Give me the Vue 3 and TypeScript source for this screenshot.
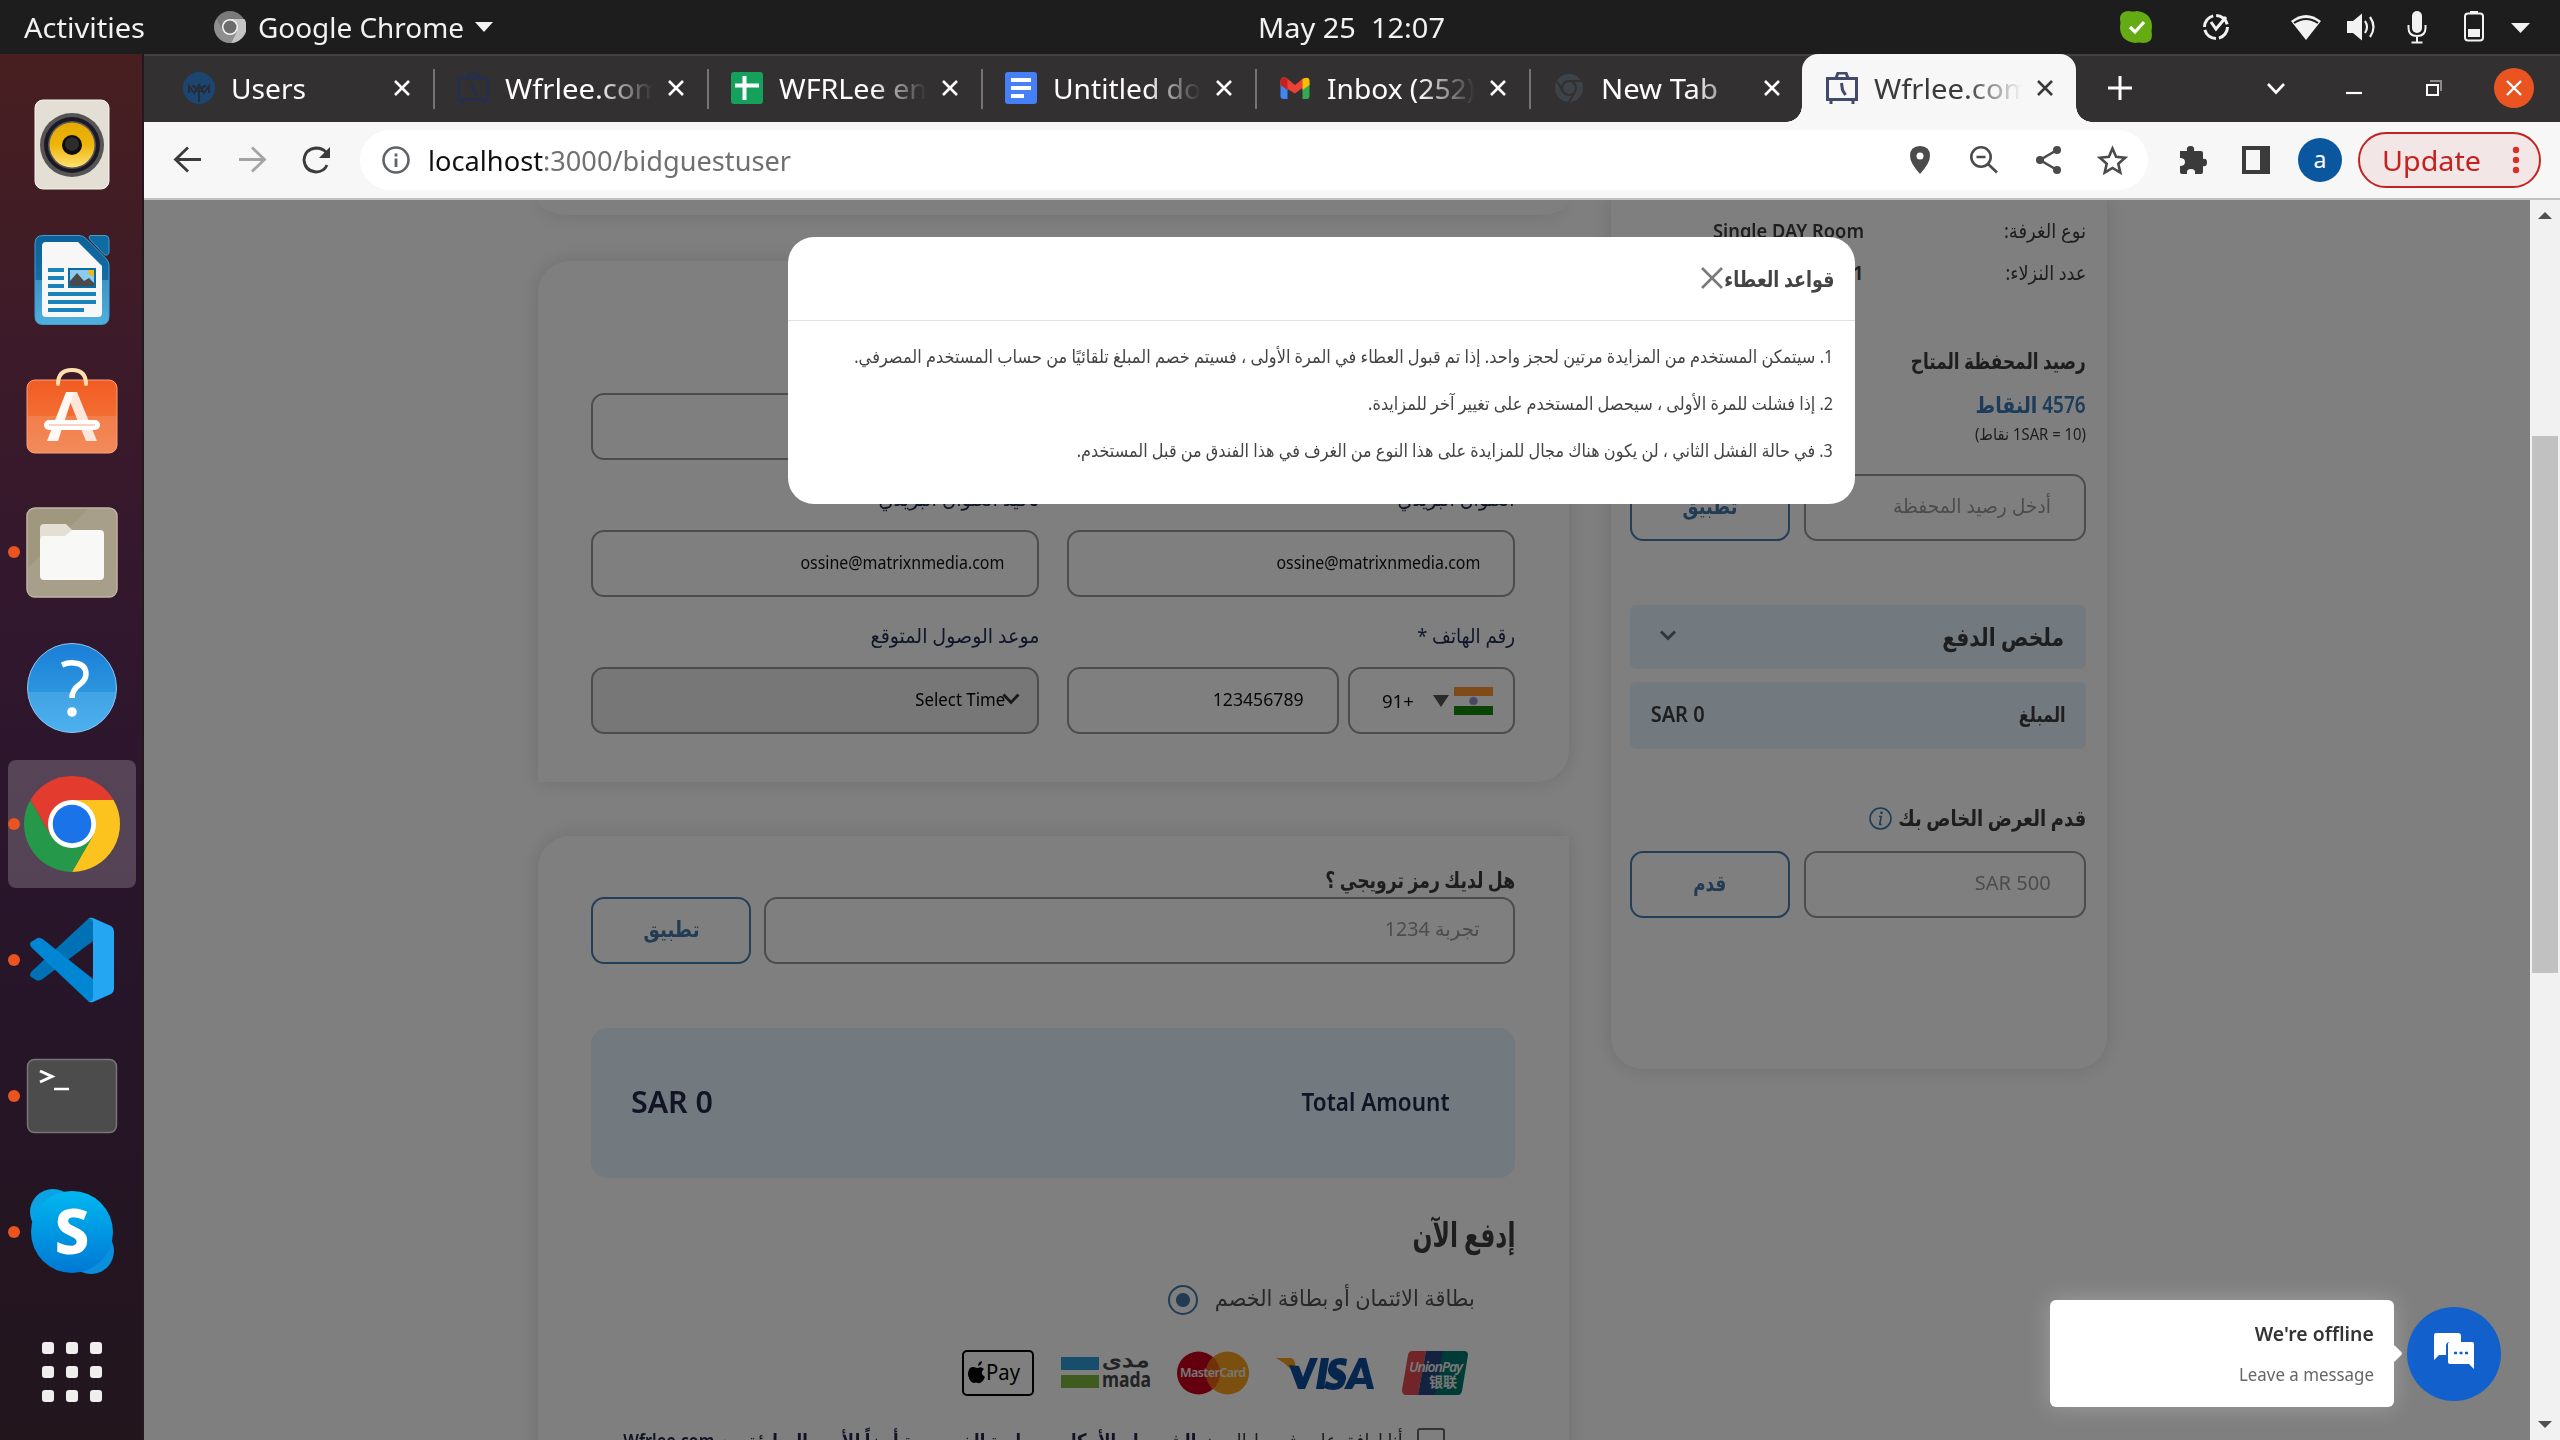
<script setup lang="ts">
interface Tab {
  icon: string
  title: string
  width: number
  active?: boolean
}

const tabs: Tab[] = [
  { icon: 'users', title: 'Users', width: 75 },
  { icon: 'case', title: 'Wfrlee.com', width: 157 },
  { icon: 'sheets', title: 'WFRLee en', width: 148 },
  { icon: 'docs', title: 'Untitled do', width: 148 },
  { icon: 'gmail', title: 'Inbox (252)', width: 148 },
  { icon: 'chrome', title: 'New Tab', width: 117 },
  { icon: 'case', title: 'Wfrlee.com', width: 157, active: true },
]

const dock = [
  { name: 'speaker', running: false },
  { name: 'writer', running: false },
  { name: 'software', running: false },
  { name: 'files', running: true },
  { name: 'help', running: false },
  { name: 'chrome', running: true },
  { name: 'code', running: true },
  { name: 'terminal', running: true },
  { name: 'skype', running: true },
]

const rules = [
  { text: '1. سيتمكن المستخدم من المزايدة مرتين لحجز واحد. إذا تم قبول العطاء في المرة الأولى ، فسيتم خصم المبلغ تلقائيًا من حساب المستخدم المصرفي.', width: 979 },
  { text: '2. إذا فشلت للمرة الأولى ، سيحصل المستخدم على تغيير آخر للمزايدة.', width: 465 },
  { text: '3. في حالة الفشل الثاني ، لن يكون هناك مجال للمزايدة على هذا النوع من الغرف في هذا الفندق من قبل المستخدم.', width: 756 },
]

const grid = [0, 24, 48]

// Squeezes or stretches a run of text to the given width in pixels.
const vFit = {
  mounted(el: HTMLElement, binding: { value: number }) {
    const natural = el.getBoundingClientRect().width
    if (!natural) return
    const rtl = getComputedStyle(el.parentElement as HTMLElement).direction === 'rtl'
    el.style.transformOrigin = rtl ? 'right center' : 'left center'
    el.style.transform = `scaleX(${binding.value / natural})`
    const rest = `${binding.value - natural}px`
    if (rtl) el.style.marginLeft = rest
    else el.style.marginRight = rest
  },
}
</script>

<template>
  <div class="desktop">
    <header class="topbar">
      <div class="top-left">
        <span v-fit="121" class="t">Activities</span>
        <svg class="top-chrome" width="32" height="32" viewBox="0 0 32 32">
          <circle cx="16" cy="16" r="16" fill="#7a7a7a" />
          <path d="M16 8h14.500A16 16 0 0 1 17 32l6-12z" fill="#c4c4c4" />
          <path d="M2.500 8A16 16 0 0 0 17 32l6-12-14 0z" fill="#8f8f8f" />
          <circle cx="16" cy="16" r="8" fill="#f4f4f4" /><circle cx="16" cy="16" r="6.500" fill="#6c6c6c" />
        </svg>
        <span v-fit="206" class="t">Google Chrome</span>
        <i class="tri"></i>
      </div>
      <div class="clock"><span v-fit="187" class="t">May 25&nbsp; 12:07</span></div>
      <svg class="tray" width="440" height="54" viewBox="2110 0 440 54" fill="#f2f2f2">
        <path d="M2120 19q0-8 9-8 3 1 8 0 15 2 15 16-1 4 0 8 0 8-9 8-3-1-8 0-15-2-15-16 1-4 0-8z" fill="#65ab14" />
        <path d="M2130 27l5 5 9-10" fill="none" stroke="#fff" stroke-width="3.200" />
        <circle cx="2216" cy="27" r="11.500" fill="none" stroke="#f2f2f2" stroke-width="3" stroke-dasharray="15 3" />
        <path d="M2211 22l5 7 10-12" fill="none" stroke="#f2f2f2" stroke-width="3" />
        <path d="M2291 21q15-12 30 0l-15 19z" /><path d="M2294 23q12-8 24 0" fill="none" stroke="#1d1d1d" stroke-width="2" />
        <path d="M2347 21h6l9-7.500v27l-9-7.500h-6z" /><path d="M2365 21q4 6 0 12M2370 17q7 10 0 20" fill="none" stroke="#f2f2f2" stroke-width="2.200" />
        <rect x="2412" y="11" width="10" height="22" rx="5" /><path d="M2408.500 25v3q0 8 8.500 8t8.500-8v-3M2417 36v6M2411.500 42.500h11" fill="none" stroke="#f2f2f2" stroke-width="2" />
        <rect x="2465" y="13.500" width="18" height="27" rx="3" fill="none" stroke="#f2f2f2" stroke-width="2" /><path d="M2470 11h8v3h-8zM2468 29h12v8h-12z" />
        <path d="M2511 23h19l-9.500 10z" />
      </svg>
    </header>

    <div class="below">
      <aside class="dock">
        <div v-for="item in dock" :key="item.name" class="dock-item" :class="{ current: item.name === 'chrome' }">
          <i v-if="item.running" class="dot"></i>
          <svg width="128" height="128" viewBox="0 0 128 128">
            <defs>
              <linearGradient id="g-writer" x2="0" y2="1"><stop stop-color="#0b6299" /><stop offset=".5" stop-color="#126ea5" /><stop offset=".5" stop-color="#3b94c6" /><stop offset="1" stop-color="#4fb0de" /></linearGradient>
              <linearGradient id="g-soft" x2="0" y2="1"><stop stop-color="#f25c22" /><stop offset=".5" stop-color="#f26d33" /><stop offset=".5" stop-color="#f27f4b" /><stop offset="1" stop-color="#f38a5a" /></linearGradient>
              <linearGradient id="g-help" x2="0" y2="1"><stop stop-color="#1b7ed6" /><stop offset=".54" stop-color="#2b96e0" /><stop offset=".54" stop-color="#42a2e4" /><stop offset="1" stop-color="#4cb0ee" /></linearGradient>
              <linearGradient id="g-skype" x2="0" y2="1"><stop stop-color="#00b7f0" /><stop offset="1" stop-color="#0078d4" /></linearGradient>
              <linearGradient id="g-yellow" x2="0" y2="1"><stop stop-color="#e5a900" /><stop offset=".5" stop-color="#edb60c" /><stop offset="1" stop-color="#ffe070" /></linearGradient>
            </defs>
            <g v-if="item.name === 'speaker'">
              <rect x="27" y="20" width="74" height="89" rx="8" fill="#e3dfd4" stroke="#f6f4ef" stroke-width="1" />
              <circle cx="64" cy="65" r="32" fill="#555" /><circle cx="64" cy="65" r="28" fill="#1c1924" />
              <circle cx="64" cy="65" r="24" fill="#55545a" /><circle cx="64" cy="65" r="22.500" fill="url(#g-yellow)" />
              <circle cx="64" cy="65" r="10" fill="#0d0d0d" /><circle cx="64" cy="64" r="7" fill="#2c2c2c" />
            </g>
            <g v-else-if="item.name === 'writer'">
              <path d="M35 19.500h36q4 0 7 3l20 20q3 3 3 7v51q0 8-8 8H35q-8 0-8-8v-73q0-8 8-8z" fill="url(#g-writer)" stroke="#3f9fd0" stroke-width="1" />
              <path d="M82 19.500h15q4 0 4 4v13q-1 4-5 2l-14-15q-2-3 0-4z" fill="#0f6ca2" stroke="#3f9fd0" stroke-width="1" />
              <path d="M38 26h32l24 24v47q0 4-4 4H38q-4 0-4-4V30q0-4 4-4z" fill="#f7f7f7" />
              <path d="M40 54h16M40 62h16M40 70h16M40 78h48M40 86h48M40 94h36" stroke="#1c84bd" stroke-width="4" />
              <rect x="60" y="52" width="28" height="20" fill="#0c6aa3" /><rect x="62" y="54" width="24" height="16" fill="#8ccaf0" />
              <path d="M62 70v-5l7-8 7 8 5-3 5 5v3z" fill="#4a4a4a" /><path d="M80 54h6v6q-6 0-6-6z" fill="#f0b90f" />
            </g>
            <g v-else-if="item.name === 'software'">
              <rect x="19" y="28" width="90" height="73" rx="8" fill="url(#g-soft)" stroke="#f6a37c" stroke-width="1" />
              <path d="M50 32q0-14 14-14t14 14" fill="none" stroke="#ffdfae" stroke-width="4" stroke-linecap="round" />
              <path d="M58 40h11l20 49H78z" fill="#ffe6da" /><path d="M58 40h8L50 89H39z" fill="#fff8f3" />
              <rect x="36" y="68" width="56" height="10" rx="5" fill="#fff" /><path d="M41 73h46" stroke="#fbd3c1" stroke-width="2" />
            </g>
            <g v-else-if="item.name === 'files'">
              <rect x="19" y="20" width="90" height="89" rx="8" fill="#a0977f" stroke="#bdb6a4" stroke-width="1.500" />
              <path d="M20 80L80 21h21q7 0 7 7v73q0 7-7 7H27q-7 0-7-7z" fill="#aba390" opacity=".7" />
              <path d="M32 50V40q0-4 4-4h22l6 6v8z" fill="#e3dfd4" />
              <path d="M36 48h21l7-6h28q4 0 4 4v42q0 4-4 4H36q-4 0-4-4V52q0-4 4-4z" fill="#f8f8f7" />
            </g>
            <g v-else-if="item.name === 'help'">
              <circle cx="64" cy="64" r="44.500" fill="url(#g-help)" stroke="#8ec9f3" stroke-width="1" />
              <path d="M54 41q7-3 12-2 12 1 12 11 0 6-7 11-7 5-7 13" fill="none" stroke="#fff" stroke-width="5.500" /><circle cx="64" cy="88" r="4.800" fill="#fff" />
            </g>
            <g v-else-if="item.name === 'chrome'">
              <path d="M64 64L22.430 40A48 48 0 0 1 105.570 40z" fill="#e33b2e" />
              <path d="M64 40H105.570A48 48 0 0 1 64 112L84.800 76z" fill="#fcc31e" />
              <path d="M22.430 40A48 48 0 0 0 64 112L84.800 76 43.200 76z" fill="#26984a" />
              <path d="M22.430 40L43.200 76 64 64V40z" fill="#e33b2e" />
              <circle cx="64" cy="64" r="24" fill="#fff" /><circle cx="64" cy="64" r="19.300" fill="#1a73e8" />
            </g>
            <g v-else-if="item.name === 'code'">
              <path d="M22 79q0-2 2-4L79 24q3-3 6-2v23L36 82q-5 4-8 2l-5-3q-1-1-1-2z" fill="#0071b5" />
              <path d="M22 48q0 2 2 4l55 52q3 3 6 2V83L36 44q-5-4-8-1l-5 3q-1 1-1 2z" fill="#0086d3" />
              <path d="M85 22l18 8q3 2 3 5v58q0 3-3 5l-18 8q-3 1-5-1 5 1 5-4V27q0-5-5-4 2-2 5-1z" fill="#24a6f2" />
            </g>
            <g v-else-if="item.name === 'terminal'">
              <rect x="19.500" y="27.500" width="89" height="73" rx="7" fill="#4c4c4c" stroke="#767676" stroke-width="1.500" />
              <path d="M32 39l12 5.500-12 5.500" fill="none" stroke="#fff" stroke-width="3" /><path d="M46 57h15" stroke="#fff" stroke-width="2.500" />
            </g>
            <g v-else>
              <circle cx="45" cy="44" r="23" fill="#0aa3e6" /><circle cx="83" cy="83" r="23" fill="#0a8fdc" />
              <circle cx="64" cy="64" r="41" fill="url(#g-skype)" />
              <text x="64" y="86" text-anchor="middle" font-family="Noto Sans, sans-serif" font-weight="800" font-size="62" fill="#fff">S</text>
            </g>
          </svg>
        </div>
        <svg class="apps" width="60" height="60" viewBox="0 0 60 60" fill="#f0efee">
          <template v-for="y in grid" :key="y"><rect v-for="x in grid" :key="x" :x="x" :y="y" width="12" height="12" rx="3" /></template>
        </svg>
      </aside>

      <main class="browser">
        <nav class="strip">
          <div v-for="(tab, i) in tabs" :key="i" class="tab" :class="{ active: tab.active, sep: i < 5 }">
            <svg width="32" height="32" viewBox="0 0 32 32">
              <g v-if="tab.icon === 'users'"><circle cx="16" cy="16" r="16" fill="#1c466f" /><path d="M6 21v-7l5 7 5-8 5 8 5-7v7M16 13v17M9 15q3-3 5 5M23 15q-3-3-5 5" fill="none" stroke="#262c38" stroke-width="2" /></g>
              <g v-else-if="tab.icon === 'case'" fill="none" :stroke="tab.active ? '#414a6b' : '#272e4b'" stroke-width="3">
                <path d="M1.500 6.500h29v21h-29z" /><path d="M10 6l2-5h8l2 5M5 27v5M27 27v5" /><path d="M15.500 11l1 7 3 5" />
              </g>
              <g v-else-if="tab.icon === 'sheets'"><rect width="32" height="32" rx="3" fill="#15a05c" /><path d="M13.500 4v24M4 13.500h24" stroke="#fff" stroke-width="4" /></g>
              <g v-else-if="tab.icon === 'docs'"><rect width="32" height="32" rx="3" fill="#4680f6" /><path d="M6 8h20M6 16h20M6 24h13" stroke="#fff" stroke-width="4" /></g>
              <g v-else-if="tab.icon === 'gmail'"><path d="M1.500 10v14q0 3 3 3h4V13z" fill="#4285f4" /><path d="M30.500 10v14q0 3-3 3h-4V13z" fill="#34a853" /><path d="M1.500 13V8q1-4 6-2l8.500 7 8.500-7V15l-8.500 6.500z" fill="#ea4335" /><path d="M1.500 13V8q1-4 7-1v11z" fill="#c5221f" /><path d="M30.500 13V8q-1-4-7-1v11z" fill="#fbbc04" /></g>
              <g v-else><circle cx="16" cy="16" r="14" fill="#3d4347" /><circle cx="16" cy="16" r="7" fill="none" stroke="#333031" stroke-width="2.200" /><path d="M16 9h12M10 19.500L4 9.500M22 19.500L16 30" stroke="#333031" stroke-width="2.200" /></g>
            </svg>
            <div class="tab-label"><span v-fit="tab.width" class="t">{{ tab.title }}</span></div>
            <svg class="x" width="18" height="18" viewBox="0 0 18 18"><path d="M2 2l14 14M16 2L2 16" fill="none" stroke="currentColor" stroke-width="2.600" /></svg>
          </div>
          <svg class="window-controls" width="484" height="68" viewBox="2076 54 484 68" fill="none" stroke="#fff" stroke-width="3">
            <path d="M2108 88h24M2120 76v24" /><path d="M2268 84l8 8.500 8-8.500" stroke-width="2.600" /><path d="M2346 93h16" stroke-width="2.200" />
            <path d="M2427 85h11v10h-11z" stroke-width="2" /><path d="M2430 81h11v10" stroke="#8b898a" stroke-width="2" />
            <circle cx="2514" cy="88" r="20" fill="#e95420" stroke="none" /><path d="M2507 81l14 14M2521 81l-14 14" stroke-width="2.400" />
          </svg>
        </nav>

        <div class="toolbar">
          <svg class="nav-icons" width="216" height="76" viewBox="144 122 216 76" fill="none" stroke="#3b3b3b" stroke-width="2.800">
            <path d="M201 159.500h-24M188 147.500l-12.500 12 12.500 12" /><path d="M239 159.500h24M252 147.500l12.500 12-12.500 12" stroke="#a3a3a3" />
            <path d="M326 152q-4-4-10-4-11 1-12 12 1 11 12 12 8 0 11-7" /><path d="M330 147v11h-11z" fill="#3b3b3b" stroke="none" />
          </svg>
          <div class="omnibox">
            <svg width="28" height="28" viewBox="0 0 28 28"><circle cx="14" cy="14" r="12.500" fill="none" stroke="#5f6368" stroke-width="2.600" /><path d="M14 12.500v8.500M14 7.500v3" stroke="#5f6368" stroke-width="2.800" /></svg>
            <p class="url"><span v-fit="115" class="t host">localhost</span><span v-fit="248" class="t">:3000/bidguestuser</span></p>
            <svg class="omni-icons" width="240" height="60" viewBox="1900 130 240 60" fill="none" stroke="#4b4b4b" stroke-width="2.600">
              <path d="M1920 146q10 0 10 10 0 7-10 18-10-11-10-18 0-10 10-10z" fill="#4b4b4b" stroke="none" /><circle cx="1920" cy="156" r="3.500" fill="#fff" stroke="none" />
              <circle cx="1981" cy="157" r="9.700" /><path d="M1976.500 157h9M1988 164l9 8.500" />
              <path d="M2057 150l-17 10 17 10" /><g fill="#4b4b4b" stroke="none"><circle cx="2057" cy="150" r="4" /><circle cx="2040" cy="160" r="4" /><circle cx="2057" cy="170" r="4" /></g>
              <path d="M2112.500 148.500l3.600 8.300 9 .9-6.800 6 2 8.900-7.800-4.600-7.800 4.600 2-8.900-6.800-6 9-.9z" />
            </svg>
          </div>
          <svg class="ext" width="120" height="60" viewBox="2170 130 120 60" fill="#3b3b3b">
            <path d="M2180 151h7q-1-5 3.500-5t3.500 5h7q2 0 2 2v6q4-1 4 3.500t-4 3.500v6q0 2-2 2h-6q1-5-4-5t-4 5h-5q-2 0-2-2v-6q5 0 5-4t-5-4v-5q0-2 0-2z" />
            <path d="M2242 146h28v28h-28zM2246 150v20h14v-20z" fill-rule="evenodd" />
          </svg>
          <div class="avatar">a</div>
          <div class="update"><span v-fit="99" class="t">Update</span><svg width="8" height="28" viewBox="0 0 8 28" fill="#d93025"><circle cx="4" cy="4" r="3.200" /><circle cx="4" cy="14" r="3.200" /><circle cx="4" cy="24" r="3.200" /></svg></div>
        </div>

        <div class="viewport">
          <div class="page" dir="rtl">
            <section class="sidebar">
              <div class="line info"><span v-fit="82">نوع الغرفة:</span></div>
              <div class="line info"><span v-fit="81">عدد النزلاء:</span></div>
              <div class="values"><b v-fit="151">Single DAY Room</b><b>1</b></div>
              <div class="line head wallet"><b v-fit="175">رصيد المحفظة المتاح</b></div>
              <div class="line points"><b v-fit="110">4576 النقاط</b></div>
              <div class="rate"><span v-fit="111">(1SAR = 10 نقاط)</span></div>
              <div class="entry"><div class="box grow ph"><span v-fit="158">أدخل رصيد المحفظة</span></div><div class="btn"><b v-fit="55">تطبيق</b></div></div>
              <div class="summary">
                <b v-fit="122">ملخص الدفع</b>
                <svg width="18" height="11" viewBox="0 0 18 11"><path d="M2 1.500l7 7 7-7" fill="none" stroke="#666c74" stroke-width="3" /></svg>
              </div>
              <div class="amount"><b v-fit="47">المبلغ</b><b v-fit="54">SAR 0</b></div>
              <div class="line head offer"><b v-fit="188">قدم العرض الخاص بك</b>
                <svg width="23" height="23" viewBox="0 0 23 23"><circle cx="11.500" cy="11.500" r="10.500" fill="none" stroke="#3a78b4" stroke-width="1.600" /><path d="M10 9.500h2.200l-1.500 8h2" fill="none" stroke="#3a78b4" stroke-width="1.600" /><circle cx="12.500" cy="5.800" r="1.400" fill="#3a78b4" /></svg>
              </div>
              <div class="entry bid"><div class="box grow ph"><span v-fit="76">SAR 500</span></div><div class="btn"><b v-fit="33">قدم</b></div></div>
            </section>

            <div class="main">
              <section class="card stub"></section>
              <section class="card guest">
                <div class="cols"><div class="box"></div><div class="box"></div></div>
                <div class="cols line label"><div><span v-fit="117">العنوان البريدي</span></div><div><span v-fit="161">تأكيد العنوان البريدي</span></div></div>
                <div class="cols"><div class="box"><span v-fit="204">ossine@matrixnmedia.com</span></div><div class="box"><span v-fit="204">ossine@matrixnmedia.com</span></div></div>
                <div class="cols line label"><div><span v-fit="98">رقم الهاتف *</span></div><div><span v-fit="169">موعد الوصول المتوقع</span></div></div>
                <div class="cols">
                  <div class="phone">
                    <div class="box country">
                      <svg width="39" height="28" viewBox="0 0 39 28"><path d="M0 0h39v9H0z" fill="#ff9933" /><path d="M0 9h39v10H0z" fill="#fff" /><path d="M0 19h39v9H0z" fill="#138808" /><circle cx="19.500" cy="14" r="4" fill="#8d8dc6" stroke="#b4b4e0" /></svg>
                      <i class="caret"></i><span v-fit="32" dir="ltr">91+</span>
                    </div>
                    <div class="box number"><span v-fit="91">123456789</span></div>
                  </div>
                  <div class="box select"><svg width="18" height="12" viewBox="0 0 18 12"><path d="M1.500 1.500L9 9.500l7.500-8" fill="none" stroke="#333" stroke-width="2.800" /></svg><span v-fit="90">Select Time</span></div>
                </div>
              </section>
              <section class="card pay">
                <div class="promo-title"><b v-fit="190">هل لديك رمز ترويجي ؟</b></div>
                <div class="entry promo"><div class="box grow ph"><span v-fit="95">تجربة 1234</span></div><div class="btn"><b v-fit="56">تطبيق</b></div></div>
                <div class="total"><b v-fit="148">Total Amount</b><b v-fit="82" class="sum">SAR 0</b></div>
                <div class="now"><b v-fit="103">إدفع الآن</b></div>
                <div class="radio"><span v-fit="260">بطاقة الائتمان أو بطاقة الخصم</span><i></i></div>
                <div class="logos">
                  <svg width="66" height="44" viewBox="0 0 66 44"><path d="M10 0h14l-8 44H4q-4 0-4-5L6 4q1-4 4-4z" fill="#e24a50" /><path d="M24 0h18l-8 44H16z" fill="#26457f" /><path d="M41 0h21q4 0 4 4l-6 36q-1 4-4 4H33z" fill="#00796f" /><text x="7" y="21" font-size="14" textLength="54" font-style="italic">UnionPay</text><text x="27" y="36" font-size="14" font-family="Noto Sans CJK SC" textLength="28">银联</text></svg>
                  <svg class="visa" width="98" height="33" viewBox="0 0 98 33"><path d="M0 1h14q4 0 5 5l4 20Q17 10 0 1z" fill="#f6a01f" /><g fill="#0c4d9c"><path d="M13 8l9 24h7L42 1h-8l-7 19-4-11zM45 1h8l-5 31h-8zM71 2l-1 7q-12-4-9 2 10 4 9 11-2 11-12 11-6 0-10-2l2-7q11 5 12 0-11-5-10-12Q54-2 71 2zM83 1h7l8 31h-7l-1-5H79l-3 5h-8zM85 10l-4 11h7z" /></g></svg>
                  <svg width="72" height="44" viewBox="0 0 72 44"><circle cx="21.500" cy="22" r="21.500" fill="#c9001b" /><circle cx="50.500" cy="22" r="21.500" fill="#f79e1b" /><path d="M36 6a21.500 21.500 0 0 1 0 32 21.500 21.500 0 0 1 0-32z" fill="#e46313" /><text x="3" y="25.500" font-size="12.500" font-weight="600" textLength="66">MasterCard</text></svg>
                  <svg width="90" height="34" viewBox="0 0 90 34"><path d="M0 1h38v13H0z" fill="#2d9cd9" /><path d="M0 19h38v13H0z" fill="#81b640" /><text x="41" y="31" font-size="22" font-weight="700" textLength="49" lengthAdjust="spacingAndGlyphs" class="dark">mada</text><text x="89" y="11" font-size="20" textLength="48" lengthAdjust="spacingAndGlyphs" class="dark" direction="rtl">مدى</text></svg>
                  <div class="apple"><svg width="66" height="40" viewBox="0 0 66 40"><path d="M14 15q3-2 6 1-5 4 1 8-3 7-7 6-2-1-4 0-4 0-6-8 0-9 6-8 2 1 4 1zM14 13q0-4 4-5 0 4-4 5z" fill="#000" /><text x="22" y="27" font-size="21" textLength="34" lengthAdjust="spacingAndGlyphs" class="black">Pay</text></svg></div>
                </div>
                <div class="terms"><i></i><span v-fit="199">أنا اوافق على شروط الحجز</span><b v-fit="573">الشروط والأحكام وسياسة الخصوصية أيضاً للأمور المبادئة من Wfrlee.com</b></div>
              </section>
            </div>
          </div>

          <div class="backdrop"></div>

          <div class="modal" dir="rtl">
            <div class="modal-head"><b v-fit="110">قواعد العطاء</b><svg width="22" height="22" viewBox="0 0 22 22"><path d="M1 1l20 20M21 1L1 21" stroke="#7a7a7a" stroke-width="2.600" /></svg></div>
            <div class="modal-body"><p v-for="rule in rules" :key="rule.width"><span v-fit="rule.width">{{ rule.text }}</span></p></div>
          </div>

          <div class="chat">
            <div class="bubble"><b v-fit="119">We're offline</b><span v-fit="135">Leave a message</span></div>
            <svg width="94" height="94" viewBox="0 0 94 94"><circle cx="47" cy="47" r="47" fill="#1260cc" /><path d="M29 26h22q3 0 3 3v6H43q-4 0-4 4v9h-7l-5 5V28q0-2 2-2z" fill="#fff" /><path d="M43 35h22q2 0 2 2v25l-5-5H43q-2 0-2-2V37q0-2 2-2z" fill="#fff" /><path d="M47 46h3M52.500 46h3M58 46h3" stroke="#1260cc" stroke-width="2.600" /></svg>
          </div>

          <div class="scrollbar"><i class="up"></i><i class="thumb"></i><i class="down"></i></div>
        </div>
      </main>
    </div>
  </div>
</template>

<style>
body { margin: 0; overflow: hidden; }
</style>

<style scoped>
.desktop { width: 2560px; height: 1440px; display: flex; flex-direction: column; overflow: hidden; font-family: 'Noto Sans', 'DejaVu Sans', sans-serif; }
.desktop * { box-sizing: border-box; }
svg { flex: none; display: block; }
p { margin: 0; }
span, b { display: inline-block; flex: none; white-space: nowrap; }
b { font-weight: 600; }
.t { font-size: 28px; line-height: 36px; }

.topbar { height: 54px; flex: none; background: #1d1d1d; color: #f2f2f2; display: grid; grid-template-columns: 1258px 1fr 440px; align-items: center; }
.top-left { display: flex; align-items: center; padding-left: 24px; }
.top-chrome { margin: 0 12px 0 69px; }
.tri { margin-left: 11px; border: 9.500px solid transparent; border-top: 10px solid #f2f2f2; border-bottom: 0; }
.tray { margin-right: 10px; justify-self: end; }

.below { flex: 1; display: flex; min-height: 0; }
.dock { width: 144px; flex: none; padding: 26px 8px 0; display: flex; flex-direction: column; align-items: center; gap: 8px; background: linear-gradient(#471f20, #3c1a29 22%, #30172e 43%, #27152a 65%, #22151c); box-shadow: inset -2px 0 #26171f; }
.dock-item { position: relative; width: 128px; height: 128px; border-radius: 8px; }
.dock-item.current { background: rgba(255, 255, 255, .2); }
.dot { position: absolute; left: 0; top: 58px; width: 12px; height: 12px; border-radius: 50%; background: #e95420; }
.apps { margin-top: 38px; }

.browser { flex: 1; min-width: 0; display: flex; flex-direction: column; }
.strip { height: 68px; flex: none; border-top: 2px solid #434142; background: #333031; padding-left: 14px; display: flex; color: #fff; }
.tab { position: relative; width: 274px; flex: none; display: flex; align-items: center; padding: 0 0 2px 25px; }
.tab.sep::after { content: ''; position: absolute; right: -3px; top: 13px; width: 2px; height: 40px; background: #757374; }
.tab.active { margin-top: -2px; padding-top: 2px; background: #f7f7f7; color: #3a3a3a; border-radius: 16px 16px 0 0; padding-left: 24px; }
.tab.active::before, .tab.active::after { content: ''; position: absolute; bottom: 0; width: 16px; height: 16px; }
.tab.active::before { left: -16px; background: radial-gradient(circle at 0 0, transparent 15.500px, #f7f7f7 16px); }
.tab.active::after { right: -16px; background: radial-gradient(circle at 100% 0, transparent 15.500px, #f7f7f7 16px); }
.tab-label { width: 148px; margin-left: 16px; overflow: hidden; display: flex; mask-image: linear-gradient(90deg, #000 62%, transparent 100%); }
.x { margin-left: 14px; }
.window-controls { margin-top: -2px; }

.toolbar { height: 78px; flex: none; background: #f7f7f7; border-bottom: 2px solid #c0c0c0; display: flex; align-items: center; }
.omnibox { width: 1788px; height: 60px; flex: none; border-radius: 30px; background: #fff; display: flex; align-items: center; padding-left: 22px; }
.url { display: flex; margin-left: 18px; color: #6f7072; }
.host { color: #111; }
.omni-icons { margin-left: auto; margin-right: 8px; }
.ext { margin-left: 22px; }
.avatar { width: 44px; height: 44px; margin-left: 8px; border-radius: 50%; background: #0b579f; color: #fff; font-size: 23px; line-height: 42px; text-align: center; }
.update { width: 183px; height: 56px; margin-left: 16px; border: 2px solid #c5221f; border-radius: 28px; background: #f3e6e6; color: #c5221f; display: flex; align-items: center; padding: 0 19px 0 22px; justify-content: space-between; }

.viewport { position: relative; height: 1240px; overflow: hidden; background: #fff; }
.page { height: 1240px; display: flex; gap: 42px; padding-right: 453px; color: #3c3c3c; }
.backdrop { position: absolute; inset: 0; background: rgba(0, 0, 0, .5); }
.line { height: 40px; line-height: 40px; }
.sidebar { position: relative; width: 496px; height: 869px; flex: none; padding: 11px 21px 0 19px; border-radius: 0 0 32px 32px; box-shadow: 0 0 20px rgba(0, 0, 0, .14); display: flex; flex-direction: column; }
.info { font-size: 20px; }
.info + .info { margin-top: 2px; }
.values { position: absolute; top: 11px; right: 243px; width: 160px; font-size: 20px; line-height: 40px; display: flex; flex-direction: column; align-items: flex-start; gap: 2px; }
.head { font-size: 22px; }
.wallet { margin-top: 47px; }
.points { margin-top: 4px; font-size: 23px; color: #3a78b4; }
.rate { margin-top: -4px; height: 26px; line-height: 28px; font-size: 16px; }
.entry { display: flex; gap: 14px; margin-top: 28px; }
.box { height: 67px; border: 2px solid #999; border-radius: 13px; padding: 0 33px 3px; display: flex; align-items: center; font-size: 18px; color: #111; }
.grow { flex: 1; }
.ph { color: #999; font-size: 20px; padding-bottom: 4px; }
.btn { width: 160px; height: 67px; border: 2px solid #4a7eb0; border-radius: 13px; color: #4578a8; font-size: 22px; display: flex; align-items: center; justify-content: center; padding-bottom: 5px; }
.summary { margin-top: 64px; height: 64px; border-radius: 6px; background: #e4f2ff; padding: 0 22px 3px 29px; font-size: 25px; display: flex; align-items: center; justify-content: space-between; }
.amount { margin-top: 13px; height: 67px; border-radius: 6px; background: #e4f2ff; padding: 0 20px 4px 21px; font-size: 21px; display: flex; align-items: center; justify-content: space-between; }
.offer { margin-top: 48px; display: flex; align-items: center; gap: 6px; }
.offer svg { margin-top: 3px; }
.bid { margin-top: 14px; }

.main { width: 1031px; flex: none; display: flex; flex-direction: column; }
.card { padding: 0 54px 0 53px; box-shadow: 0 0 20px rgba(0, 0, 0, .14); flex: none; }
.stub { height: 15px; border-radius: 0 0 32px 32px / 0 0 15px 15px; }
.guest { margin-top: 46px; height: 521px; padding-top: 132px; border-radius: 32px 32px 32px 0; }
.cols { display: grid; grid-template-columns: 448px 448px; gap: 28px; }
.label { margin: 19px 0 11px; font-size: 20px; color: #202c55; }
.phone { display: flex; gap: 9px; }
.country { width: 167px; padding: 0 20px; }
.caret { margin: 0 5px 0 19px; border: 8px solid transparent; border-top: 12px solid #555; border-bottom: 0; }
.number { flex: 1; }
.select { background: #efefef; padding: 0 17px 3px; color: #000; }
.select span { margin-right: -3px; }
.pay { margin-top: 54px; height: 700px; padding-top: 25px; border-radius: 32px 0 0 0; }
.promo-title { height: 36px; line-height: 36px; font-size: 22px; }
.promo { margin-top: 0; gap: 13px; }
.total { margin-top: 64px; height: 150px; border-radius: 16px; background: #e4f2ff; color: #24294d; padding: 0 65px 4px 40px; display: flex; align-items: center; justify-content: space-between; font-size: 25px; }
.sum { font-size: 30px; }
.now { margin-top: 31px; height: 50px; line-height: 50px; font-size: 34px; }
.radio { margin-top: 21px; height: 40px; padding-right: 40px; display: flex; align-items: center; gap: 17px; font-size: 22px; color: #505050; }
.radio span { padding-bottom: 6px; }
.radio i { width: 30px; height: 30px; border: 2.500px solid #4578a8; border-radius: 50%; background: radial-gradient(circle, #4578a8 6.500px, transparent 7.500px); }
.logos { margin-top: 30px; height: 46px; padding-right: 47px; display: flex; align-items: center; gap: 26.500px; direction: rtl; }
.logos svg { direction: ltr; }
.logos text { fill: #eee; font-weight: 600; font-family: 'Noto Sans', 'Noto Sans CJK SC', sans-serif; }
.logos .dark { fill: #45464a; font-weight: 700; }
.logos .black { fill: #000; font-weight: 400; }
.visa { margin-right: 2px; }
.apple { width: 72px; height: 46px; border: 2px solid #000; border-radius: 5px; display: flex; justify-content: center; align-items: center; }
.apple svg { margin-left: -2px; }
.terms { margin-top: 32px; padding-right: 70px; display: flex; gap: 8px; font-size: 20px; line-height: 26px; }
.terms i { width: 28px; height: 28px; margin-left: 6px; border: 2px solid #666; border-radius: 3px; flex: none; }
.terms b { color: #24294d; }

.modal { position: absolute; left: 644px; top: 37px; width: 1067px; height: 267px; border-radius: 26px; background: #fff; color: #444; }
.modal-head { height: 84px; border-bottom: 1px solid #dfe0e6; padding: 0 21px 2px; display: flex; align-items: center; gap: 1px; font-size: 22px; }
.modal-body { padding: 13px 22px; }
.modal-body p { height: 47px; line-height: 44px; font-size: 18px; }

.chat { position: absolute; right: 59px; top: 1100px; display: flex; align-items: center; gap: 13px; }
.bubble { position: relative; width: 344px; height: 107px; border-radius: 6px; background: #fff; box-shadow: 0 0 22px rgba(255, 255, 255, .25); direction: rtl; padding: 14px 20px 0; color: #333; display: flex; flex-direction: column; align-items: flex-start; font-size: 20px; line-height: 40px; }
.bubble span { color: #666; font-size: 18px; }
.bubble::after { content: ''; position: absolute; right: -6px; top: 47px; width: 13px; height: 13px; background: #fff; transform: rotate(45deg); border-radius: 2px; }
.scrollbar { position: absolute; right: 0; top: 0; width: 30px; height: 1240px; background: #f1f1f1; display: flex; flex-direction: column; align-items: center; }
.up { margin-top: 12px; border: 7px solid transparent; border-bottom: 7px solid #505050; border-top: 0; }
.thumb { margin-top: 217px; width: 26px; height: 537px; background: #c1c1c1; }
.down { margin-top: auto; margin-bottom: 12px; border: 7px solid transparent; border-top: 7px solid #505050; border-bottom: 0; }
</style>
